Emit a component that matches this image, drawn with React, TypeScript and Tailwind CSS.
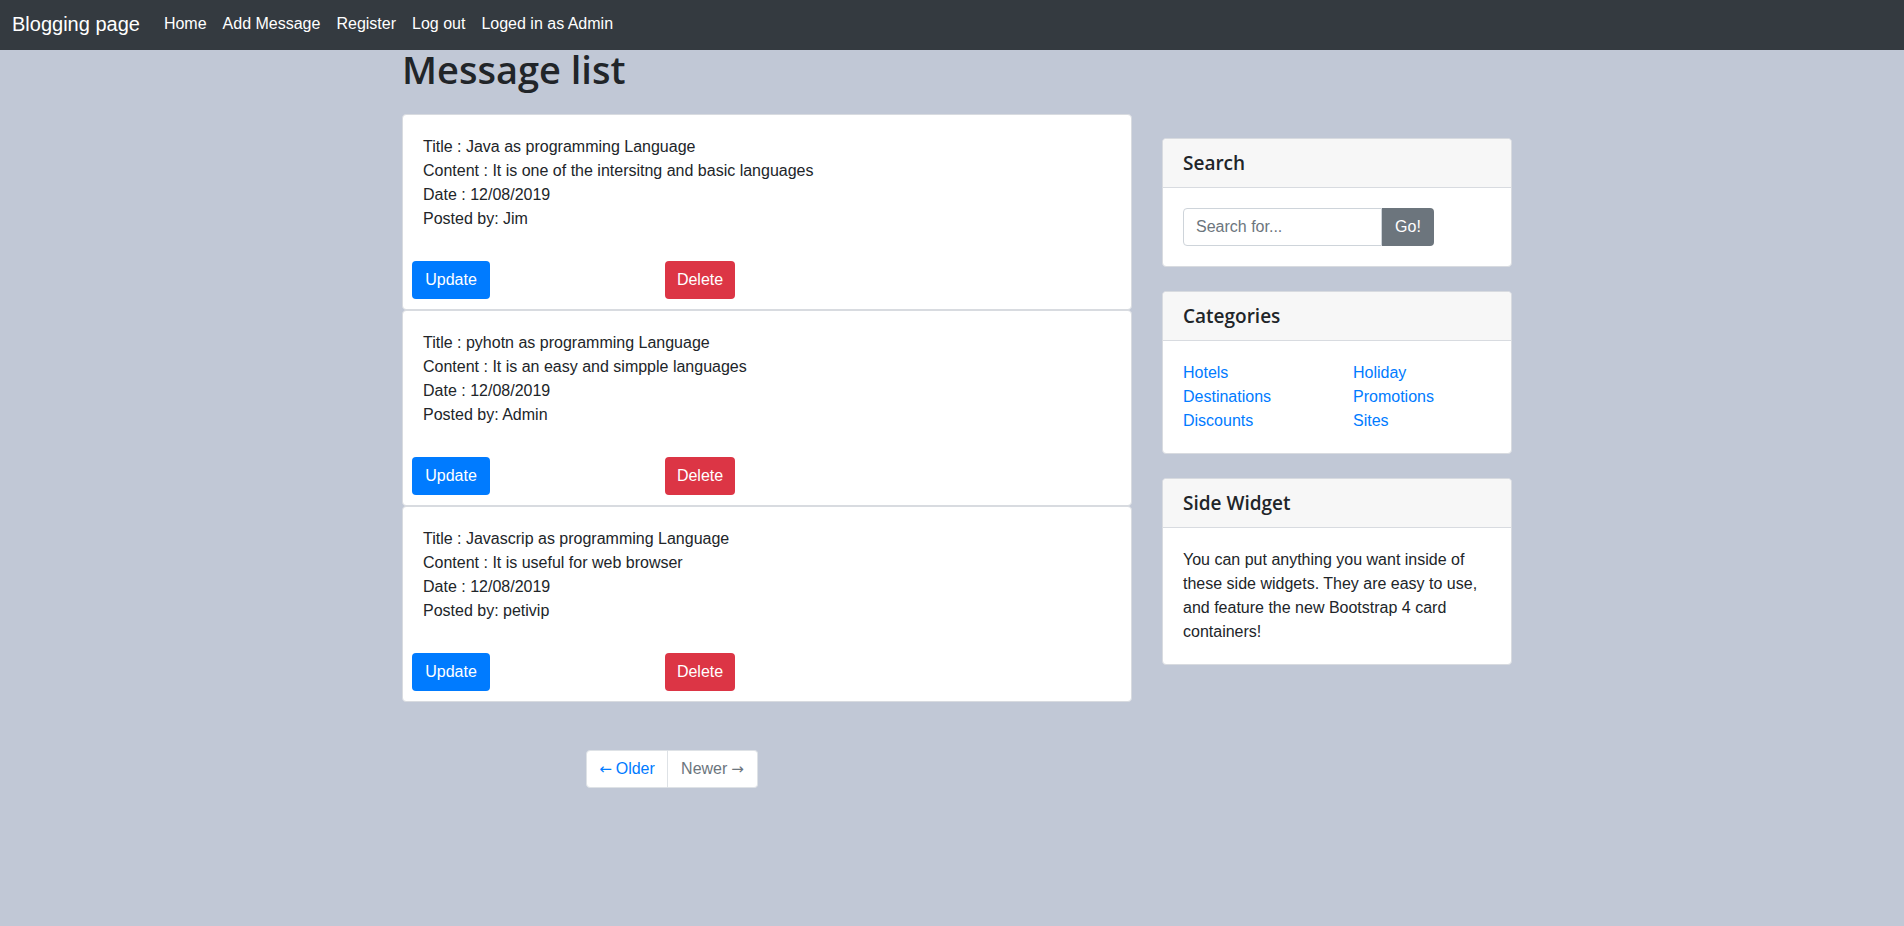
import React from 'react';

const FONT = "font-['Liberation_Sans','Noto_Sans',sans-serif]";
const HEAD_FONT = "font-['Open_Sans','Liberation_Sans',sans-serif]";

const MESSAGES = [
    { title: 'Java as programming Language', content: 'It is one of the intersitng and basic languages', date: '12/08/2019', author: 'Jim' },
    { title: 'pyhotn as programming Language', content: 'It is an easy and simpple languages', date: '12/08/2019', author: 'Admin' },
    { title: 'Javascrip as programming Language', content: 'It is useful for web browser', date: '12/08/2019', author: 'petivip' },
];

const NAV_LINKS = ['Home', 'Add Message', 'Register', 'Log out', 'Loged in as Admin'];

const MessageCard: React.FC<{ m: (typeof MESSAGES)[number] }> = ({ m }) => (
    <div className="bg-white border border-[#d8dbe0] rounded-[4px] h-[196px] flex flex-col">
        <div className="px-5 pt-5 text-base leading-6 text-[#212529]">
            <div>Title : {m.title}</div>
            <div>Content : {m.content}</div>
            <div>Date : {m.date}</div>
            <div>Posted by: {m.author}</div>
        </div>
        <div className="flex items-center pl-[9px] mt-[30px]">
            <div className="w-[253px]">
                <button className="w-[78px] h-[38px] rounded-[4px] bg-[#007bff] text-white text-base">Update</button>
            </div>
            <button className="w-[70px] h-[38px] rounded-[4px] bg-[#dc3545] text-white text-base">Delete</button>
        </div>
    </div>
);

const SideCard: React.FC<{ title: string; children: React.ReactNode }> = ({ title, children }) => (
    <div className="bg-white border border-[#d8dbe0] rounded-[4px] mb-6">
        <div className="bg-[#f7f7f7] border-b border-[#d8dbe0] rounded-t-[4px] px-5 py-3">
            <h5 className={`text-[19px] leading-6 font-semibold text-[#212529] ${HEAD_FONT}`}>{title}</h5>
        </div>
        <div className="p-5">{children}</div>
    </div>
);

export default function App() {
    return (
        <div className={`min-h-screen bg-[#c1c8d6] text-[#212529] ${FONT}`}>
            {/* navbar */}
            <nav className="h-[50px] bg-[#343a40] flex items-center pl-3 pb-[3px]">
                <span className="text-xl text-white mr-4">Blogging page</span>
                <ul className="flex items-center">
                    {NAV_LINKS.map(l => (
                        <li key={l} className="px-2 text-base text-white">{l}</li>
                    ))}
                </ul>
            </nav>

            <div className="w-[1140px] mx-auto pl-[20px] pr-[10px]">
                <h1 className={`h-[64px] text-[38px] leading-[48px] font-semibold text-[#212529] -mt-[5px] mb-[5px] ${HEAD_FONT}`}>Message list</h1>
                <div className="flex">
                    <div className="w-[730px] mr-[30px]">
                        {MESSAGES.map((m, i) => (
                            <MessageCard key={i} m={m} />
                        ))}
                        {/* pagination */}
                        <div className="flex mt-[48px] ml-[184px]">
                            <span className="w-[82px] h-[38px] flex items-center justify-center gap-1 bg-white border border-[#dee2e6] rounded-l-[4px] text-[#007bff] text-base">
                                <span className="font-['DejaVu_Sans'] text-[15px]">←</span>Older
                            </span>
                            <span className="w-[90px] h-[38px] flex items-center justify-center gap-1 bg-white border border-l-0 border-[#dee2e6] rounded-r-[4px] text-[#6c757d] text-base">
                                Newer<span className="font-['DejaVu_Sans'] text-[15px]">→</span>
                            </span>
                        </div>
                    </div>
                    <div className="w-[350px] pt-6">
                        <SideCard title="Search">
                            <div className="flex">
                                <input
                                    placeholder="Search for..."
                                    className="w-[199px] h-[38px] border border-[#ced4da] rounded-l-[4px] px-3 text-base placeholder:text-[#6c757d] outline-none"
                                />
                                <button className="w-[52px] h-[38px] bg-[#6c757d] text-white rounded-r-[4px] text-base">Go!</button>
                            </div>
                        </SideCard>
                        <SideCard title="Categories">
                            <div className="grid grid-cols-[170px_1fr] text-base leading-6 text-[#007bff]">
                                <ul>
                                    <li>Hotels</li>
                                    <li>Destinations</li>
                                    <li>Discounts</li>
                                </ul>
                                <ul>
                                    <li>Holiday</li>
                                    <li>Promotions</li>
                                    <li>Sites</li>
                                </ul>
                            </div>
                        </SideCard>
                        <SideCard title="Side Widget">
                            <p className="text-base leading-6">
                                You can put anything you want inside of these side widgets. They are easy to use, and feature the new Bootstrap 4 card containers!
                            </p>
                        </SideCard>
                    </div>
                </div>
            </div>
        </div>
    );
}
